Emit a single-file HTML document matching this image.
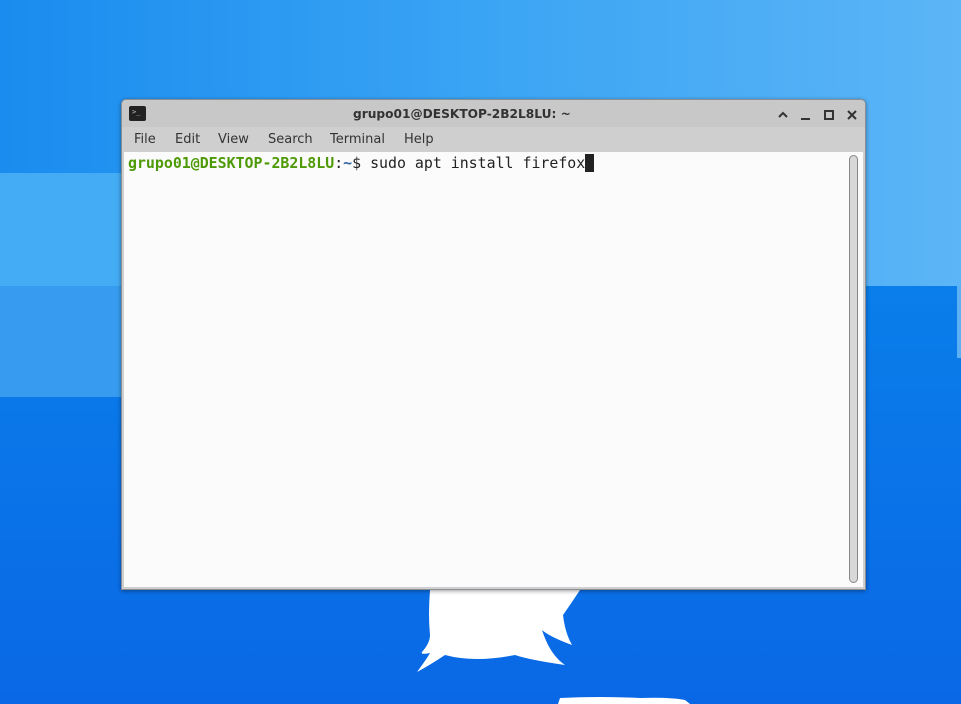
<!DOCTYPE html>
<html><head><meta charset="utf-8"><style>
html,body{margin:0;padding:0;width:961px;height:704px;overflow:hidden;position:relative;background:#0a6ee8}
.abs{position:absolute}
.win{left:121px;top:99px;width:745px;height:491px;background:#cfcfcf;border:1px solid #8a8f96;box-sizing:border-box;border-radius:5px 5px 0 0;box-shadow:0 1px 4px rgba(0,0,0,.4)}
.title{left:231px;top:0;height:27px;background:transparent;font:bold 12.2px "DejaVu Sans","Liberation Sans",sans-serif;color:#333;line-height:28px;white-space:nowrap}
.tbar{left:0;top:0;width:743px;height:27px;background:#c8c8c8;border-radius:5px 5px 0 0}
.menu{left:0;top:27px;height:25px;width:743px;font:13px "DejaVu Sans","Liberation Sans",sans-serif;color:#333;line-height:25px}
.menu span{position:absolute;top:0}
.term{left:2px;top:52px;width:739px;height:435px;background:#fbfbfb}
.line{left:4px;top:1px;font:14.9px "DejaVu Sans Mono","Liberation Mono",monospace;color:#222;white-space:pre;line-height:18px}
.g{color:#4e9a06;font-weight:bold}
.b{color:#3465a4;font-weight:bold}
</style></head><body>
<div class="abs" style="left:0;top:0;width:961px;height:286px;background:linear-gradient(90deg,#1a8cef,#3aa4f4 50%,#5cb5f6)"></div>
<div class="abs" style="left:0;top:173px;width:130px;height:113px;background:#44acf5"></div>
<div class="abs" style="left:0;top:286px;width:961px;height:418px;background:linear-gradient(180deg,#0a7eea,#0a68e6)"></div>
<div class="abs" style="left:0;top:286px;width:124px;height:111px;background:#379cef"></div>
<div class="abs" style="left:957px;top:286px;width:4px;height:72px;background:#5cb0f3"></div>
<svg class="abs" style="left:400px;top:585px" width="300" height="119" viewBox="0 0 300 119">
<path d="M30 5 L180 5 Q170 20 163 30 Q165 48 172 60 Q150 52 142 45 Q150 70 165 80 Q130 75 115 70 Q75 78 45 70 Q30 80 17 87 Q28 72 30 68 Q20 70 22 67 Q30 58 30 50 Q28 30 30 5Z" fill="#fff"/>
<path d="M158 119 L160 113 Q200 111 240 113 Q270 112 285 115 L290 119Z" fill="#fff"/>
</svg>
<div class="abs win">
 <div class="abs tbar"></div>
 <div class="abs title">grupo01@DESKTOP-2B2L8LU: ~</div>
 <div class="abs" style="left:7px;top:6px;width:17px;height:15px;background:#222;border-radius:2px"><div style="position:absolute;left:3px;top:2px;font:7px monospace;color:#ccc">&gt;_</div></div>
 <svg class="abs" style="left:652px;top:8px" width="85" height="14" viewBox="0 0 85 14">
  <path d="M5 9 L9 5 L13 9" stroke="#333" stroke-width="2" fill="none"/>
  <path d="M27 11 H36" stroke="#333" stroke-width="2"/>
  <rect x="51" y="3" width="8" height="8" stroke="#333" stroke-width="2" fill="none"/>
  <path d="M74 3 L82 11 M82 3 L74 11" stroke="#333" stroke-width="2"/>
 </svg>
 <div class="abs menu"><span style="left:12px">File</span><span style="left:53px">Edit</span><span style="left:96px">View</span><span style="left:146px">Search</span><span style="left:208px">Terminal</span><span style="left:282px">Help</span></div>
 <div class="abs term">
  <div class="abs line" style="top:2px"><span class="g">grupo01@DESKTOP-2B2L8LU</span>:<span class="b">~</span>$ sudo apt install firefox<span style="background:#222"> </span></div>
  <div class="abs" style="left:725px;top:3px;width:9px;height:428px;border:1px solid #888;border-radius:5px;background:#d8d8d8;box-sizing:border-box"></div>
 </div>
</div>
</body></html>
